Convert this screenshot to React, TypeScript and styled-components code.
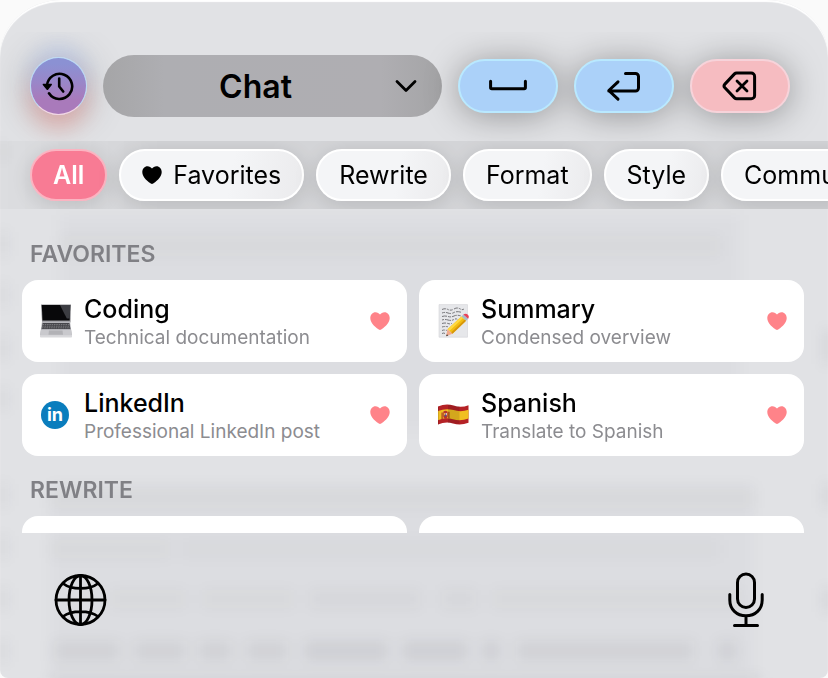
import React, { useState } from "react";
import styled, { createGlobalStyle, css } from "styled-components";

const GlobalStyle = createGlobalStyle`
  *, *::before, *::after { box-sizing: border-box; }
  body {
    margin: 0;
    background: #fafafa;
    color: #000;
    font-family: Inter, "Liberation Sans", sans-serif;
  }
  button, select { font: inherit; color: inherit; margin: 0; }
  svg { display: block; flex: none; }
`;

const Keyboard = styled.main`
  position: relative;
  display: flex;
  flex-direction: column;
  height: 100vh;
  overflow: hidden;
  border-radius: 62px 62px 8px 8px / 56px 56px 8px 8px;
  background: #e1e2e5;
  box-shadow: inset 0 2px 1px #ffffff;
`;

const Backdrop = styled.svg`
  position: absolute;
  inset: 0;
  width: 100%;
  height: 100%;
`;

const Toolbar = styled.header`
  position: relative;
  display: flex;
  align-items: center;
  gap: 16px;
  margin-top: 32px;
  padding: 23px 38px 24px 30px;
  overflow: hidden;
`;

const HistoryButton = styled.button`
  display: grid;
  place-items: center;
  flex: none;
  width: 57px;
  height: 58px;
  padding: 0 2px 0 0;
  border: 1px solid #b9d9f5;
  border-bottom-color: #f3d5e4;
  border-radius: 50%;
  background: linear-gradient(#8b91d3 10%, #9a86c8 45%, #a97abb 75%);
  box-shadow: 0 -12px 20px rgba(160, 190, 255, 0.3),
    0 14px 22px rgba(255, 120, 110, 0.32), 0 2px 40px rgba(0, 0, 0, 0.3);
`;

const ModePicker = styled.label`
  position: relative;
  display: flex;
  flex: 1;
  min-width: 0;

  svg {
    position: absolute;
    right: 25px;
    top: 24px;
    pointer-events: none;
  }
`;

const ModeSelect = styled.select`
  width: 100%;
  height: 62px;
  padding: 0 58px 0 24px;
  border: 0;
  border-radius: 31px;
  appearance: none;
  background: linear-gradient(90deg, #a5a5a7, #aeaeb2 18%, #afaeb2 82%, #a4a4a6);
  font-size: 32px;
  font-weight: 600;
  text-align-last: center;
`;

const KeyButton = styled.button<{ $tone: "blue" | "pink" }>`
  display: grid;
  place-items: center;
  flex: none;
  width: 100px;
  height: 54px;
  padding: 0;
  border-radius: 27px;
  ${({ $tone }) =>
    $tone === "blue"
      ? css`
          border: 2px solid #b9e9ff;
          background: #abd1f9;
        `
      : css`
          border: 2px solid #f7d3da;
          background: #f6bcc1;
        `}
`;

/* The keys share one soft shadow, so it never falls on a neighbouring key. */
const Keys = styled.div`
  display: flex;
  gap: 16px;
  filter: drop-shadow(0 3px 17px rgba(0, 0, 0, 0.34));
`;

const Filters = styled.nav`
  position: relative;
  display: flex;
  flex: none;
  gap: 12px;
  padding: 8px 0 8px 30px;
  overflow: hidden;
  background: linear-gradient(90deg, rgba(0, 0, 0, 0.02), rgba(0, 0, 0, 0.06) 20%);
`;

const Chip = styled.button<{ $active: boolean }>`
  display: flex;
  align-items: center;
  flex: none;
  gap: 11px;
  height: 52px;
  padding: 0 21px;
  border: 2px solid ${({ $active }) => ($active ? "#fbb4c1" : "#ffffff")};
  border-radius: 26px;
  background: ${({ $active }) =>
    $active ? "#f87b94" : "linear-gradient(100deg, #f4f5f7 60%, #ebebed)"};
  color: ${({ $active }) => ($active ? "#ffffff" : "#000000")};
  font-size: 25px;
  font-weight: ${({ $active }) => ($active ? 600 : 400)};
  box-shadow: 0 4px 24px rgba(0, 0, 0, 0.14);
`;

const Prompts = styled.div`
  position: relative;
  flex: 1;
  min-height: 0;
  padding: 30px 24px 0 22px;
  overflow: hidden;
`;

const Section = styled.section`
  margin-bottom: 19px;
`;

const SectionTitle = styled.h2`
  margin: 0 0 11px 8px;
  color: #808085;
  font-size: 23px;
  font-weight: 600;
  line-height: 30px;
`;

const CardGrid = styled.div`
  display: grid;
  grid-template-columns: 1fr 1fr;
  gap: 12px;
`;

const Card = styled.button`
  display: flex;
  align-items: center;
  gap: 12px;
  min-width: 0;
  height: 82px;
  padding: 0 17px 0 18px;
  border: 0;
  border-radius: 16px;
  background: #ffffff;
  text-align: left;
`;

const CardText = styled.span`
  display: flex;
  flex: 1;
  flex-direction: column;
  min-width: 0;
  padding-top: 3px;
`;

const CardTitle = styled.span`
  font-size: 25px;
  font-weight: 500;
  line-height: 30px;
`;

const CardNote = styled.span`
  color: #8c8c90;
  font-size: 19px;
  line-height: 28px;
`;

const LinkedInBadge = styled.span`
  display: grid;
  place-items: center;
  flex: none;
  width: 28px;
  height: 28px;
  margin: 0 3px 0 1px;
  border-radius: 50%;
  background: #0a7dbd;
  color: #ffffff;
  font-size: 18px;
  font-weight: 700;
  line-height: 28px;
`;

const BottomBar = styled.footer`
  position: relative;
  display: flex;
  align-items: center;
  justify-content: space-between;
  flex: none;
  height: 145px;
  padding: 0 64px 12px 54px;
`;

const PlainButton = styled.button`
  padding: 0;
  border: 0;
  background: none;
`;

/* Softly diffused lines of content showing through the keyboard glass. */
const bands: [number, number, number, number, number][] = [
  [0, 140, 6, 24, 0.06], [0, 232, 6, 24, 0.08], [0, 284, 6, 22, 0.08],
  [0, 336, 6, 24, 0.08], [0, 388, 6, 22, 0.08], [0, 484, 6, 22, 0.08],
  [0, 536, 6, 22, 0.08], [0, 588, 6, 22, 0.08], [0, 640, 6, 22, 0.08],
  [824, 330, 8, 34, 0.08], [824, 484, 8, 24, 0.08], [824, 588, 8, 24, 0.08],
  [60, 215, 680, 215, 0.02], [60, 236, 660, 20, 0.03],
  [50, 484, 704, 190, 0.02],
  [50, 488, 704, 20, 0.03], [50, 540, 120, 18, 0.03], [180, 540, 540, 18, 0.025],
  [110, 590, 76, 18, 0.03], [202, 590, 92, 18, 0.03], [310, 590, 110, 18, 0.04],
  [442, 590, 34, 18, 0.04], [492, 590, 250, 18, 0.03],
  [54, 641, 66, 20, 0.06], [134, 641, 52, 20, 0.06], [198, 641, 34, 20, 0.06],
  [246, 641, 42, 20, 0.06], [304, 641, 84, 20, 0.07], [402, 641, 66, 20, 0.07],
  [482, 641, 18, 20, 0.07], [516, 641, 178, 20, 0.06], [718, 641, 18, 20, 0.07],
  [50, 676, 710, 12, 0.08],
];

const Glass = () => (
  <Backdrop viewBox="0 0 828 678" preserveAspectRatio="none" aria-hidden="true">
    <defs>
      <filter id="diffuse" x="-10%" y="-10%" width="120%" height="120%" colorInterpolationFilters="sRGB">
        <feGaussianBlur stdDeviation="7" />
      </filter>
    </defs>
    <g filter="url(#diffuse)" fill="#14142a">
      {bands.map(([x, y, w, h, o], i) => (
        <rect key={i} x={x} y={y} width={w} height={h} opacity={o} />
      ))}
    </g>
  </Backdrop>
);

const stroke = {
  fill: "none",
  stroke: "#000",
  strokeLinecap: "round",
  strokeLinejoin: "round",
} as const;

const HistoryIcon = () => (
  <svg width="32" height="30" viewBox="0 0 32 30" aria-hidden="true">
    <path {...stroke} strokeWidth="2.6" d="M5 14.5A12.6 12.6 0 1 1 7 22.3" />
    <path {...stroke} strokeWidth="2.6" d="M17.2 7.5v8l4 5" />
    <path d="M1.4 12.8h7.8c.7 0 1 .7.6 1.2l-3.7 4.7c-.4.5-1 .5-1.4 0L.8 14c-.4-.5-.1-1.2.6-1.2z" />
  </svg>
);

const Chevron = () => (
  <svg width="22" height="14" viewBox="0 0 22 14" aria-hidden="true">
    <path {...stroke} strokeWidth="2.8" d="M2 2.5l9 9 9-9" />
  </svg>
);

const SpaceIcon = () => (
  <svg width="40" height="14" viewBox="0 0 40 14" aria-hidden="true">
    <path {...stroke} strokeWidth="3" d="M2.6 2.2v6.4q0 1.2 1.2 1.2h32.4q1.2 0 1.2-1.2V2.2" />
  </svg>
);

const ReturnIcon = () => (
  <svg width="36" height="32" viewBox="0 0 36 32" aria-hidden="true">
    <path {...stroke} strokeWidth="3" d="M19.5 3.5h10a3 3 0 0 1 3 3v11.500a3 3 0 0 1-3 3H2.800M12 11.800l-9.200 8.700 9.200 8.700" />
  </svg>
);

const DeleteIcon = () => (
  <svg width="36" height="30" viewBox="0 0 36 30" aria-hidden="true">
    <path
      {...stroke}
      strokeWidth="3"
      d="M14.600 2h14.600a3.400 3.400 0 0 1 3.400 3.400v19a3.400 3.400 0 0 1-3.400 3.400H14.600a3 3 0 0 1-2.100-.9L2.900 16.700a2.600 2.600 0 0 1 0-3.600l9.600-10.200a3 3 0 0 1 2.100-.9z"
    />
    <path {...stroke} strokeWidth="2.8" d="M15 9.900l10 10M25 9.900l-10 10" />
  </svg>
);

const Heart = ({ color }: { color: string }) => (
  <svg width="20" height="18" viewBox="0 0 20 18" aria-hidden="true">
    <path
      fill={color}
      d="M10 18c-.4 0-.8-.3-1.2-.5C3.6 14.2.3 10.2.3 6.1.3 2.6 2.6.2 5.5.2 7.4.2 9 1.200 10 2.600 11 1.200 12.600.2 14.500.2c2.900 0 5.200 2.400 5.200 5.900 0 4.100-3.300 8.100-8.500 11.400-.4.2-.8.5-1.200.5z"
    />
  </svg>
);

const LaptopIcon = () => (
  <svg width="32" height="34" viewBox="0 0 32 34" aria-hidden="true">
    <path fill="#8f8f93" d="M1 .5h30l-.5 18H2z" />
    <path fill="#08080a" d="M1.800 1h28.400l-.5 15.500H2.500z" />
    <path fill="#3c3d42" d="M20 1h10.200l-.4 13.500h-3z" />
    <path fill="#b4b4b9" d="M2 17.500h28l2 14H0z" />
    <path fill="#46464b" d="M2.600 19h26.800l1 6H1.600z" />
    <path stroke="#9a9a9e" strokeWidth=".6" strokeDasharray="1.500 .8" d="M2.500 20.500h27M2.200 22.200h27.600M1.900 23.800h28.200" />
    <path fill="#c9c9cd" d="M.9 26h30.200l.8 5.500H.1z" />
    <path fill="#b2b2b6" d="M9 26.500h13.500l.5 4.300H8.500z" />
    <path fill="#d9d9dc" d="M0 31.500h32v1.200q0 .8-.8.8H.8q-.8 0-.8-.8z" />
  </svg>
);

const MemoIcon = () => (
  <svg width="32" height="34" viewBox="0 0 32 34" aria-hidden="true">
    <path fill="#e6e7ea" stroke="#d3d4d7" strokeWidth=".6" d="M2 .6h28.500v32.600H2z" />
    <g fill="none" stroke="#77777b" strokeWidth="1">
      <path strokeDasharray="4 1 2 1 3 1.500" d="M5 5.500q3-1.500 6 0t6-.5 6-.2 4 0" />
      <path strokeDasharray="3 1 5 1.500" d="M5 9q3-1.200 6 0t6-.5 8 0" />
      <path strokeDasharray="5 1 3 1" d="M5 12.500q3-1 6 0t6-.5 7 0" />
      <path strokeDasharray="2 1 6 1" d="M5 16q3-1 6 0t6-.5 3 0" />
      <path strokeDasharray="4 1 3 1" d="M5 19.500q3-1 6 0t4-.5" />
      <path strokeDasharray="3 1 2 1" d="M5 23q3-1 7 0M5 26.500q2-1 5 0M5 29.500q2-1 3 0" />
    </g>
    <path fill="#f2bd12" d="M24.500 12.500l4.600 4.200-13.600 13-5-4.500z" />
    <path fill="#ffd941" d="M24.500 12.500l1.700 1.600-13.800 13-1.900-1.900z" />
    <path fill="#d7960b" d="M27.800 15.500l1.300 1.200-13.600 13-1.300-1.200z" />
    <path fill="#a8bdc6" d="M26.300 10.500l4.800 4.300-2 1.900-4.600-4.200z" />
    <path fill="#e94258" d="M26.300 10.500q2.600-1.700 4.600.2 1.700 2 .2 4.100z" />
    <path fill="#f0aa8d" d="M10.500 25.200l5 4.500-6.500 2.600z" />
    <path fill="#333" d="M10 30.200l1.300 1.200L9 32.300z" />
  </svg>
);

const FlagIcon = () => (
  <svg width="32" height="24" viewBox="0 0 32 24" aria-hidden="true">
    <path fill="#b52226" d="M1 3.500q8-3.600 15.500-1t15-.3v17.500q-8 3-15.500.7T1 21.600z" />
    <path fill="#f1bf22" d="M1 8q8-3.200 15.500-.9t15-.4v8.800q-8 3-15.500.7T1 17.200z" />
    <path fill="#a43b25" d="M4.500 9.500h1.200v6.500H4.500zM11.300 8.700h1.200v6.500h-1.200z" />
    <path fill="#b8332b" d="M6.300 8.800q2.200-2 4.400 0v4.800q-.4 2-2.200 2.500-1.800-.5-2.200-2.500z" />
    <path fill="#e3b34b" d="M7 10h1.300v2.200H7z" />
    <path fill="#cfc0d3" d="M8.700 10H10v2.200H8.700z" />
    <circle cx="8.500" cy="12.500" r=".9" fill="#41539c" />
    <path fill="#000" opacity=".12" d="M1 3.500h1v18l-1 .1zM11 2q3-.3 5.500.5t6 .8v17.500q-4 0-6-.5t-5.500-.3z" />
  </svg>
);

const GlobeIcon = () => (
  <svg width="54" height="54" viewBox="0 0 54 54" aria-hidden="true">
    <g {...stroke} strokeWidth="2.8">
      <circle cx="26.500" cy="27" r="24.500" />
      <ellipse cx="26.500" cy="27" rx="11.500" ry="24.500" />
      <path d="M26.500 2.500v49M2 27h49M9 10.500c8.500 6.600 26.500 6.600 35 0M9 43.500c8.500-6.600 26.500-6.600 35 0" />
    </g>
  </svg>
);

const MicIcon = () => (
  <svg width="36" height="56" viewBox="0 0 36 56" aria-hidden="true">
    <g {...stroke} strokeWidth="3">
      <rect x="9.500" y="2" width="17" height="33.500" rx="8.500" />
      <path d="M1.800 22.500v5.500c0 9.300 6.800 15.800 16.200 15.800S34.200 37.300 34.200 28v-5.500M18 44v9.500M6.500 53.500h23" />
    </g>
  </svg>
);

const filters = ["All", "Favorites", "Rewrite", "Format", "Style", "Communication"];

const favorites = [
  { title: "Coding", note: "Technical documentation", icon: <LaptopIcon /> },
  { title: "Summary", note: "Condensed overview", icon: <MemoIcon /> },
  { title: "LinkedIn", note: "Professional LinkedIn post", icon: <LinkedInBadge aria-hidden="true">in</LinkedInBadge> },
  { title: "Spanish", note: "Translate to Spanish", icon: <FlagIcon /> },
];

export default function App() {
  const [active, setActive] = useState("All");

  return (
    <>
      <GlobalStyle />
      <Keyboard>
        <Glass />
        <Toolbar>
          <HistoryButton type="button" aria-label="History"><HistoryIcon /></HistoryButton>
          <ModePicker>
            <ModeSelect aria-label="Mode" defaultValue="Chat">
              <option>Chat</option>
            </ModeSelect>
            <Chevron />
          </ModePicker>
          <Keys>
            <KeyButton type="button" $tone="blue" aria-label="Space"><SpaceIcon /></KeyButton>
            <KeyButton type="button" $tone="blue" aria-label="Return"><ReturnIcon /></KeyButton>
            <KeyButton type="button" $tone="pink" aria-label="Delete"><DeleteIcon /></KeyButton>
          </Keys>
        </Toolbar>
        <Filters aria-label="Categories">
          {filters.map((name) => (
            <Chip
              key={name}
              type="button"
              $active={name === active}
              aria-pressed={name === active}
              onClick={() => setActive(name)}
            >
              {name === "Favorites" && <Heart color="#000000" />}
              {name}
            </Chip>
          ))}
        </Filters>
        <Prompts>
          <Section aria-labelledby="favorites-title">
            <SectionTitle id="favorites-title">FAVORITES</SectionTitle>
            <CardGrid>
              {favorites.map(({ title, note, icon }) => (
                <Card key={title} type="button">
                  {icon}
                  <CardText>
                    <CardTitle>{title}</CardTitle>
                    <CardNote>{note}</CardNote>
                  </CardText>
                  <Heart color="#ff8389" />
                </Card>
              ))}
            </CardGrid>
          </Section>
          <Section aria-labelledby="rewrite-title">
            <SectionTitle id="rewrite-title">REWRITE</SectionTitle>
            <CardGrid>
              <Card type="button" aria-label="First rewrite prompt" />
              <Card type="button" aria-label="Second rewrite prompt" />
            </CardGrid>
          </Section>
        </Prompts>
        <BottomBar>
          <PlainButton type="button" aria-label="Next keyboard"><GlobeIcon /></PlainButton>
          <PlainButton type="button" aria-label="Dictate"><MicIcon /></PlainButton>
        </BottomBar>
      </Keyboard>
    </>
  );
}
